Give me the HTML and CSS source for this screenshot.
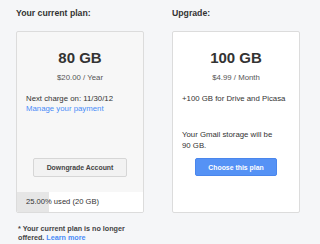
FILE: index.html
```html
<!DOCTYPE html>
<html lang="en">
<head>
    <meta charset="UTF-8">
    <meta name="viewport" content="width=device-width, initial-scale=1.0">
    <title>Storage Plans</title>
    <link rel="stylesheet" href="styles.css">
</head>
<body>
    <div class="plans">
        <div class="plan-column">
            <h3 class="plan-label">Your current plan:</h3>
            <div class="plan-card current">
                <div class="plan-size">80 GB</div>
                <div class="plan-price">$20.00 / Year</div>
                <div class="plan-details">
                    Next charge on: 11/30/12<br>
                    <a href="#" class="link">Manage your payment</a>
                </div>
                <button class="btn btn-default">Downgrade Account</button>
                <div class="usage">
                    <div class="usage-fill" style="width: 25%"></div>
                    <span class="usage-text">25.00% used (20 GB)</span>
                </div>
            </div>
            <p class="footnote">
                <span class="footnote-line">* Your current plan is no longer</span>
                <span class="footnote-line">offered. <a href="#" class="link">Learn more</a></span>
            </p>
        </div>

        <div class="plan-column">
            <h3 class="plan-label">Upgrade:</h3>
            <div class="plan-card upgrade">
                <div class="plan-size">100 GB</div>
                <div class="plan-price">$4.99 / Month</div>
                <div class="plan-feature">+100 GB for Drive and Picasa</div>
                <div class="plan-note">Your Gmail storage will be 90 GB.</div>
                <button class="btn btn-primary">Choose this plan</button>
            </div>
        </div>
    </div>
</body>
</html>
```

FILE: styles.css
```css
body {
    margin: 0;
    font-family: "Liberation Sans", Arial, sans-serif;
    background-color: #f5f6f8;
    color: #333;
}

.plans {
    display: flex;
    gap: 28px;
    padding: 7px 0 0 16px;
}

.plan-column {
    width: 128px;
}

.plan-label {
    margin: 0 0 12px;
    font-size: 8.7px;
    line-height: 12px;
    font-weight: bold;
    color: #333;
}

.plan-card {
    height: 182px;
    box-sizing: border-box;
    border: 1px solid #dcdcdc;
    border-radius: 2px;
    overflow: hidden;
}

.plan-card.current {
    background-color: #f7f7f7;
}

.plan-card.upgrade {
    background-color: #fff;
}

.plan-size {
    margin-top: 17px;
    font-size: 15px;
    line-height: 18px;
    font-weight: bold;
    text-align: center;
    color: #333;
}

.plan-price {
    margin-top: 5px;
    font-size: 7.8px;
    line-height: 11px;
    text-align: center;
    color: #555;
}

.plan-details,
.plan-feature,
.plan-note {
    padding: 0 9px;
    font-size: 7.8px;
    color: #333;
}

.plan-details {
    margin-top: 11px;
    line-height: 9.5px;
}

.plan-feature {
    margin-top: 11px;
    line-height: 10px;
}

.plan-note {
    margin-top: 25px;
    line-height: 11px;
    width: 100px;
}

.link {
    color: #4a8cf7;
    text-decoration: none;
}

.btn {
    display: block;
    margin: 0 auto;
    padding: 0;
    border-radius: 2px;
    font-family: inherit;
    font-size: 6.9px;
    font-weight: bold;
    cursor: pointer;
}

.btn-default {
    margin-top: 45px;
    width: 94px;
    height: 19px;
    background-color: #f2f2f2;
    border: 1px solid #d6d6d6;
    color: #444;
}

.btn-primary {
    margin-top: 7px;
    width: 82px;
    height: 18px;
    background-color: #5592f5;
    border: 1px solid #4a86ec;
    color: #fff;
}

.usage {
    position: relative;
    margin-top: 15px;
    height: 20px;
    background-color: #fff;
}

.usage-fill {
    height: 100%;
    background-color: #e6e6e6;
}

.usage-text {
    position: absolute;
    left: 9px;
    top: 0;
    font-size: 7.6px;
    line-height: 20px;
    color: #333;
}

.footnote {
    display: flex;
    flex-direction: column;
    margin: 11px 0 0 2px;
    font-size: 7.2px;
    line-height: 9px;
    font-weight: bold;
    color: #444;
}
```
